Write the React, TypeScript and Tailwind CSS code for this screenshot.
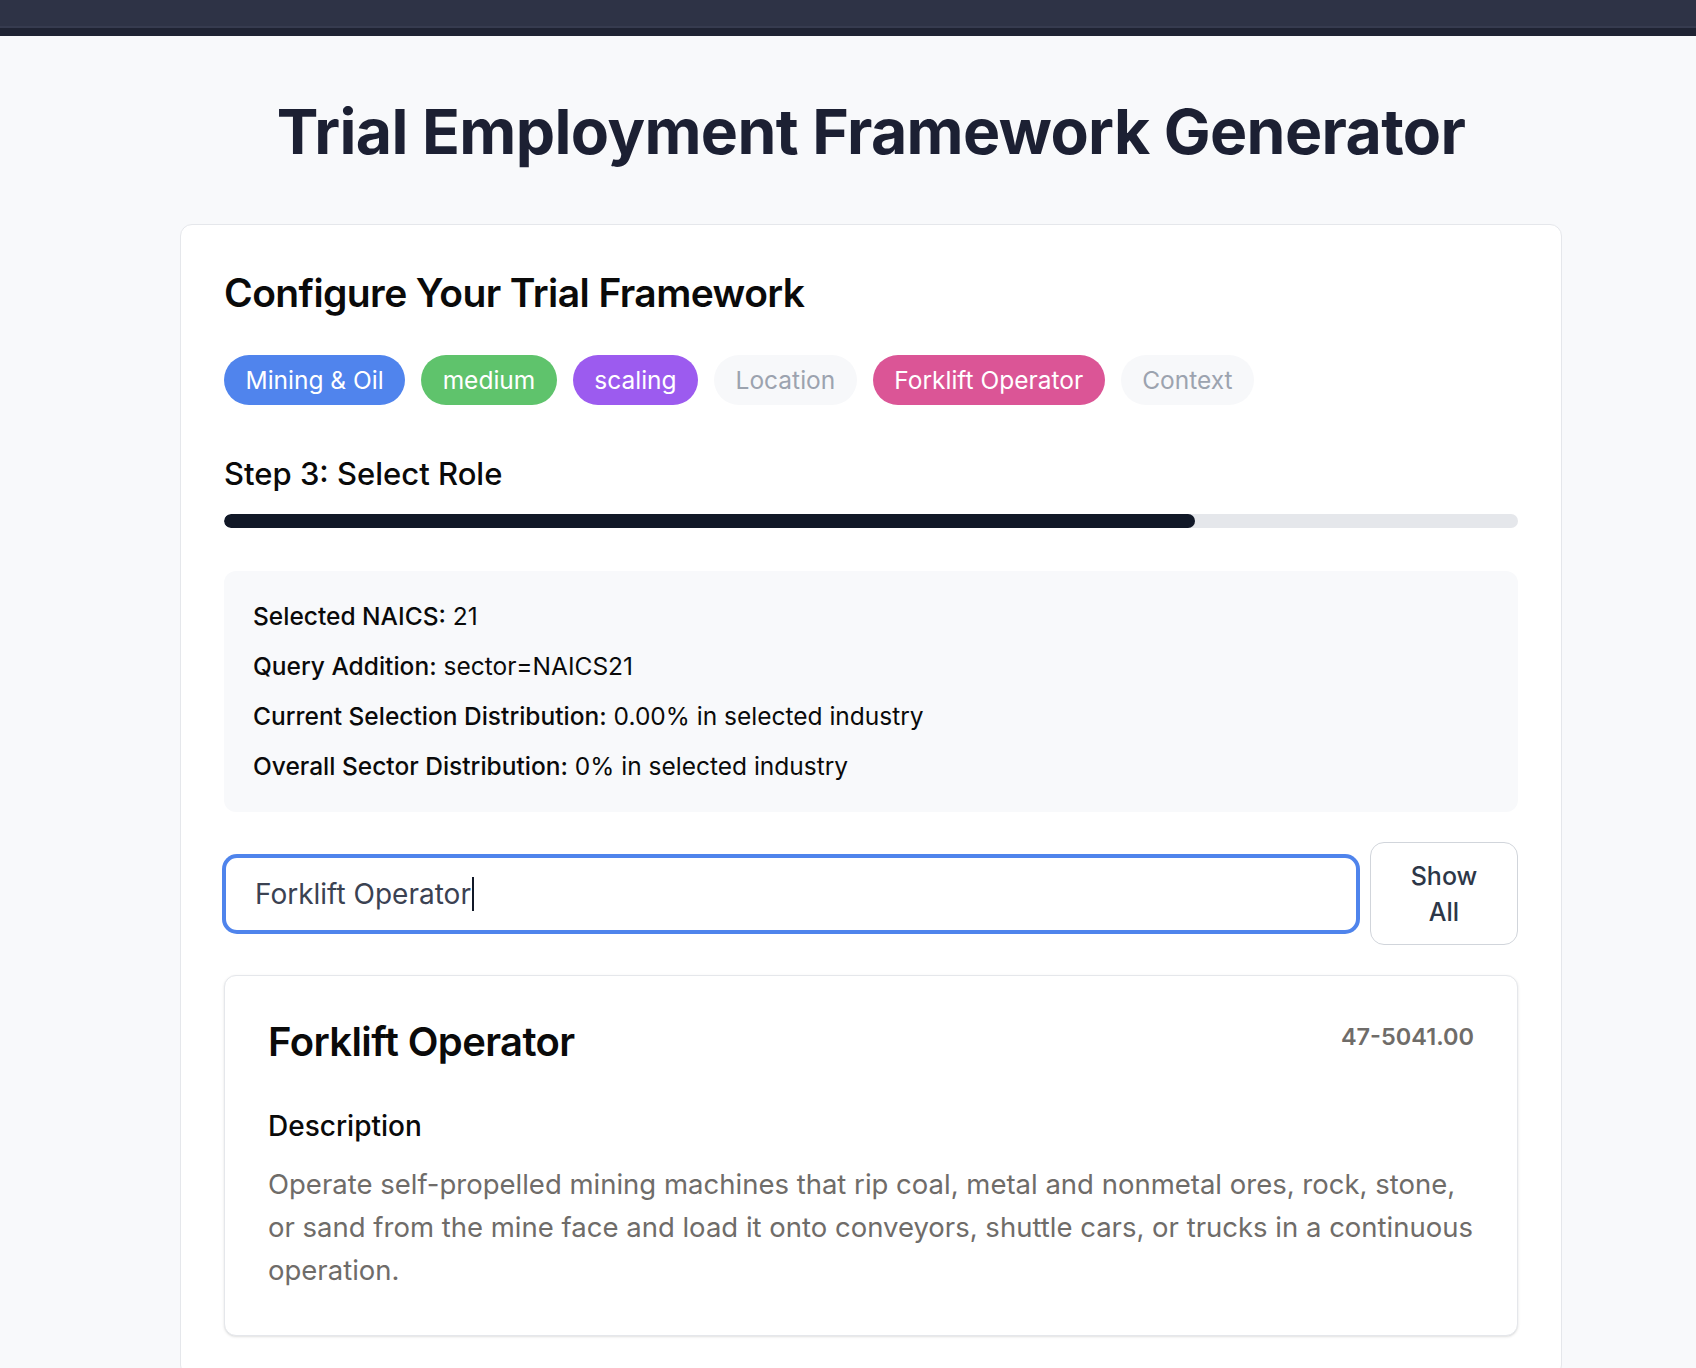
import React from 'react'

const chips = [
  { label: 'Mining & Oil', cls: 'bg-[#5084ed] text-white' },
  { label: 'medium', cls: 'bg-[#5fc36c] text-white' },
  { label: 'scaling', cls: 'bg-[#9c5bef] text-white' },
  { label: 'Location', cls: 'bg-[#f7f8fa] text-[#9ca3af]' },
  { label: 'Forklift Operator', cls: 'bg-[#db5596] text-white' },
  { label: 'Context', cls: 'bg-[#f7f8fa] text-[#9ca3af]' },
]

const facts = [
  { k: 'Selected NAICS:', v: '21' },
  { k: 'Query Addition:', v: 'sector=NAICS21' },
  { k: 'Current Selection Distribution:', v: '0.00% in selected industry' },
  { k: 'Overall Sector Distribution:', v: '0% in selected industry' },
]

export default function App() {
  const progress = 75

  return (
    <div
      className="min-h-screen bg-[#f8f9fb]"
      style={{ fontFamily: 'Inter, "Noto Sans", sans-serif' }}
    >
      {/* top bar */}
      <div className="h-[26px] bg-[#2e3346]" />
      <div className="h-[2px] bg-[#363b4f]" />
      <div className="h-[8px] bg-[#1f2333]" />

      <div className="pl-[180px]">
        <div className="w-[1382px]">
          <h1 className="pt-[56px] pb-[54px] text-center text-[62.5px] leading-[78px] font-bold tracking-[-0.01em] text-[#1c2033]">
            Trial Employment Framework Generator
          </h1>

          <div className="rounded-xl border border-[#e5e7eb] bg-white px-[43px] pt-[45px] pb-[40px]">
            <h2 className="text-[39px] leading-[46px] font-semibold tracking-[-0.015em] text-[#0a0a0a]">
              Configure Your Trial Framework
            </h2>

            <div className="mt-[39px] flex flex-wrap gap-4">
              {chips.map((c) => (
                <span
                  key={c.label}
                  className={`rounded-full px-[21.5px] py-[9px] text-[24.5px] leading-[32px] ${c.cls}`}
                >
                  {c.label}
                </span>
              ))}
            </div>

            <h3 className="mt-[51px] text-[31px] leading-[36px] font-medium text-[#0a0a0a]">
              Step 3: Select Role
            </h3>

            <div className="mt-[22px] h-[14px] w-full overflow-hidden rounded-full bg-[#e5e7eb]">
              <div
                className="h-full rounded-full bg-[#111827]"
                style={{ width: `${progress}%` }}
              />
            </div>

            <div className="mt-[43px] flex flex-col gap-[17px] rounded-xl bg-[#f8f9fb] p-[29px] text-[24.5px] leading-[33px] text-[#0a0a0a]">
              {facts.map((f) => (
                <p key={f.k}>
                  <span className="font-medium">{f.k}</span> {f.v}
                </p>
              ))}
            </div>

            <div className="mt-[30px] flex items-center gap-3">
              <div className="flex h-[76px] flex-1 items-center rounded-[13px] border-2 border-[#4f84ec] bg-white px-[29px] ring-2 ring-[#4f84ec]">
                <span className="text-[28px] leading-none text-[#3b4252]">Forklift Operator</span>
                <span className="ml-[1px] h-[34px] w-[2px] bg-[#111827]" />
              </div>
              <button className="h-[103px] w-[148px] rounded-[14px] border border-[#d1d5db] bg-white text-[25px] leading-[36px] font-medium text-[#2d3748]">
                Show
                <br />
                All
              </button>
            </div>

            <div className="mt-[30px] rounded-xl border border-[#e5e7eb] bg-white px-[43px] pt-[42px] pb-[43px] shadow-sm">
              <div className="flex items-start justify-between">
                <h4 className="text-[40px] leading-[48px] font-semibold tracking-[-0.015em] text-[#0a0a0a]">
                  Forklift Operator
                </h4>
                <span className="pt-[3px] text-[23.5px] leading-[32px] font-semibold text-[#6f6c69]">
                  47-5041.00
                </span>
              </div>

              <h5 className="mt-[42px] text-[28px] leading-[36px] font-medium text-[#0a0a0a]">
                Description
              </h5>
              <p className="mt-[19px] text-[27.5px] leading-[43px] text-[#6f6c69]">
                Operate self-propelled mining machines that rip coal, metal and nonmetal ores, rock, stone,
                or sand from the mine face and load it onto conveyors, shuttle cars, or trucks in a
                continuous operation.
              </p>
            </div>
          </div>
        </div>
      </div>
    </div>
  )
}
